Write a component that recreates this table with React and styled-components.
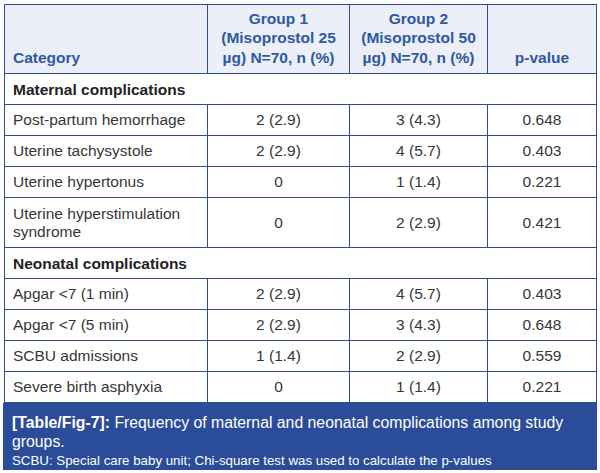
import React from "react";
import styled, { createGlobalStyle } from "styled-components";

const Global = createGlobalStyle`
  html, body { margin: 0; padding: 0; background: #ffffff; }
  body { font-family: "Liberation Sans", Arial, sans-serif; }
`;

const Page = styled.div`
  width: 600px;
  height: 473px;
  box-sizing: border-box;
  padding: 4px 4px 0 4px;
  background: #ffffff;
`;

const Table = styled.table`
  width: 592px;
  border-collapse: collapse;
  table-layout: fixed;
  font-family: "Liberation Sans", Arial, sans-serif;
  font-size: 15.5px;
  color: #363636;
`;

const Th = styled.th`
  box-sizing: border-box;
  height: 69px;
  padding: 0 6px 6px ${(p) => (p.$left ? "8px" : "6px")};
  border: 1px solid #2f4e88;
  background: #eceef8;
  color: #2f58a4;
  font-weight: 700;
  font-size: 15.5px;
  line-height: 19.5px;
  vertical-align: bottom;
  text-align: ${(p) => (p.$left ? "left" : "center")};
`;

const SectionCell = styled.td`
  box-sizing: border-box;
  height: 31px;
  padding: 0 8px;
  border: 1px solid #2f4e88;
  color: #222222;
  font-weight: 700;
  line-height: 19px;
  vertical-align: middle;
`;

const Td = styled.td`
  box-sizing: border-box;
  height: ${(p) => (p.$tall ? "50px" : "31px")};
  padding: 0 8px;
  border: 1px solid #2f4e88;
  line-height: 18px;
  vertical-align: middle;
  text-align: ${(p) => (p.$left ? "left" : "center")};
`;

const Caption = styled.div`
  margin: 0 -1px;
  box-sizing: border-box;
  height: 67px;
  padding: 10px 9px 0 9px;
  background: #2b4c98;
  color: #ffffff;
  font-family: "Liberation Sans", Arial, sans-serif;
  font-size: 15.8px;
  line-height: 19px;
`;

const CaptionLabel = styled.span`
  font-weight: 700;
`;

const Note = styled.div`
  font-size: 13.3px;
  line-height: 19px;
`;

const rows = [
  { section: "Maternal complications" },
  { cat: "Post-partum hemorrhage", g1: "2 (2.9)", g2: "3 (4.3)", p: "0.648" },
  { cat: "Uterine tachysystole", g1: "2 (2.9)", g2: "4 (5.7)", p: "0.403" },
  { cat: "Uterine hypertonus", g1: "0", g2: "1 (1.4)", p: "0.221" },
  { cat: "Uterine hyperstimulation syndrome", g1: "0", g2: "2 (2.9)", p: "0.421", tall: true },
  { section: "Neonatal complications" },
  { cat: "Apgar <7 (1 min)", g1: "2 (2.9)", g2: "4 (5.7)", p: "0.403" },
  { cat: "Apgar <7 (5 min)", g1: "2 (2.9)", g2: "3 (4.3)", p: "0.648" },
  { cat: "SCBU admissions", g1: "1 (1.4)", g2: "2 (2.9)", p: "0.559" },
  { cat: "Severe birth asphyxia", g1: "0", g2: "1 (1.4)", p: "0.221" },
];

export default function App() {
  return (
    <Page>
      <Global />
      <Table>
        <colgroup>
          <col style={{ width: "203px" }} />
          <col style={{ width: "142px" }} />
          <col style={{ width: "138px" }} />
          <col style={{ width: "109px" }} />
        </colgroup>
        <thead>
          <tr>
            <Th $left>Category</Th>
            <Th>
              Group 1<br />(Misoprostol 25<br />µg) N=70, n (%)
            </Th>
            <Th>
              Group 2<br />(Misoprostol 50<br />µg) N=70, n (%)
            </Th>
            <Th>p-value</Th>
          </tr>
        </thead>
        <tbody>
          {rows.map((r, i) =>
            r.section ? (
              <tr key={i}>
                <SectionCell colSpan={4}>{r.section}</SectionCell>
              </tr>
            ) : (
              <tr key={i}>
                <Td $left $tall={r.tall}>{r.cat}</Td>
                <Td $tall={r.tall}>{r.g1}</Td>
                <Td $tall={r.tall}>{r.g2}</Td>
                <Td $tall={r.tall}>{r.p}</Td>
              </tr>
            )
          )}
        </tbody>
      </Table>
      <Caption>
        <CaptionLabel>[Table/Fig-7]:</CaptionLabel>{" "}Frequency of maternal and neonatal complications among study groups.
        <Note>SCBU: Special care baby unit; Chi-square test was used to calculate the p-values</Note>
      </Caption>
    </Page>
  );
}
